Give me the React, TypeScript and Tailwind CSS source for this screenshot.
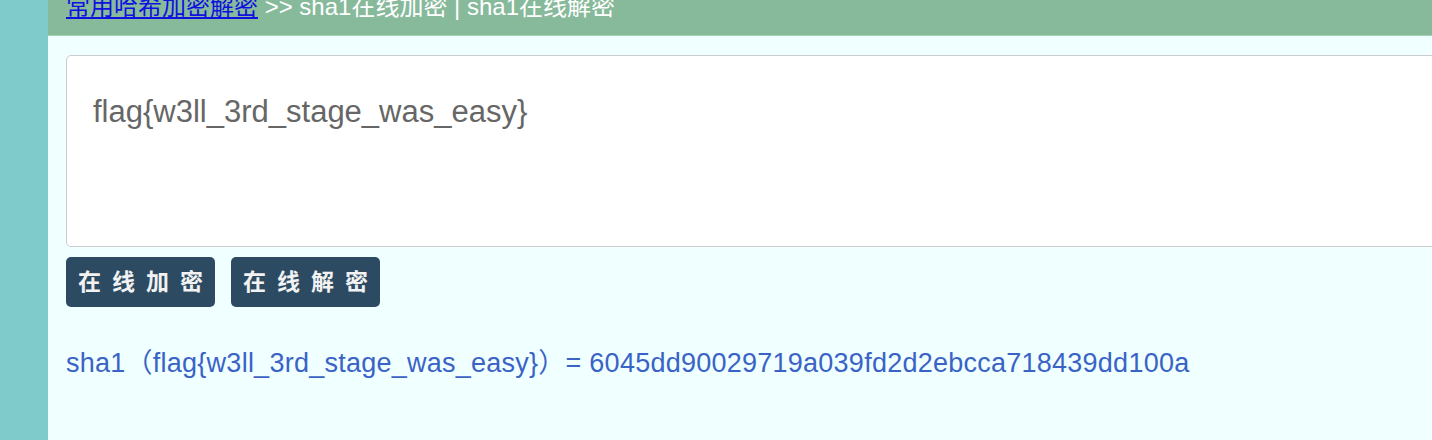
export default function App() {
  const flag = "flag{w3ll_3rd_stage_was_easy}";
  return (
    <div
      className="flex h-[440px] w-[1432px] overflow-hidden bg-[#f0ffff]"
      style={{ fontFamily: '"Liberation Sans", "Noto Sans CJK SC", sans-serif' }}
    >
      <div className="w-[48px] flex-none bg-[#7fcaca]" />
      <div className="flex min-w-0 flex-1 flex-col">
        <div className="flex h-[36px] flex-none items-start overflow-hidden border-b border-[#a6d2b8] bg-[#87b99b] pl-[18px]">
          <div className="-mt-[8px] whitespace-nowrap text-[24px] leading-[30px] text-white">
            <a href="#" className="text-[#1010e0] underline">
              常用哈希加密解密
            </a>
            <span> &gt;&gt; sha1在线加密 | sha1在线解密</span>
          </div>
        </div>
        <div className="flex flex-col pl-[18px] pt-[19px]">
          <div className="-mr-[10px] h-[192px] rounded-[5px] border border-[#cccccc] bg-white px-[26px] pt-[37px] text-[31px] leading-[38px] text-[#666666]">
            {flag}
          </div>
          <div className="mt-[10px] flex gap-[16px]">
            <button className="h-[50px] w-[149px] rounded-[5px] bg-[#2c4b63] pl-[11px] text-[23px] font-bold tracking-[11px] text-[#f2f2f2]">
              在线加密
            </button>
            <button className="h-[50px] w-[149px] rounded-[5px] bg-[#2c4b63] pl-[11px] text-[23px] font-bold tracking-[11px] text-[#f2f2f2]">
              在线解密
            </button>
          </div>
          <div className="mt-[39px] whitespace-nowrap text-[27px] leading-[34px] tracking-[0.25px] text-[#3a63c6]">
            sha1（{flag}）= 6045dd90029719a039fd2d2ebcca718439dd100a
          </div>
        </div>
      </div>
    </div>
  );
}
